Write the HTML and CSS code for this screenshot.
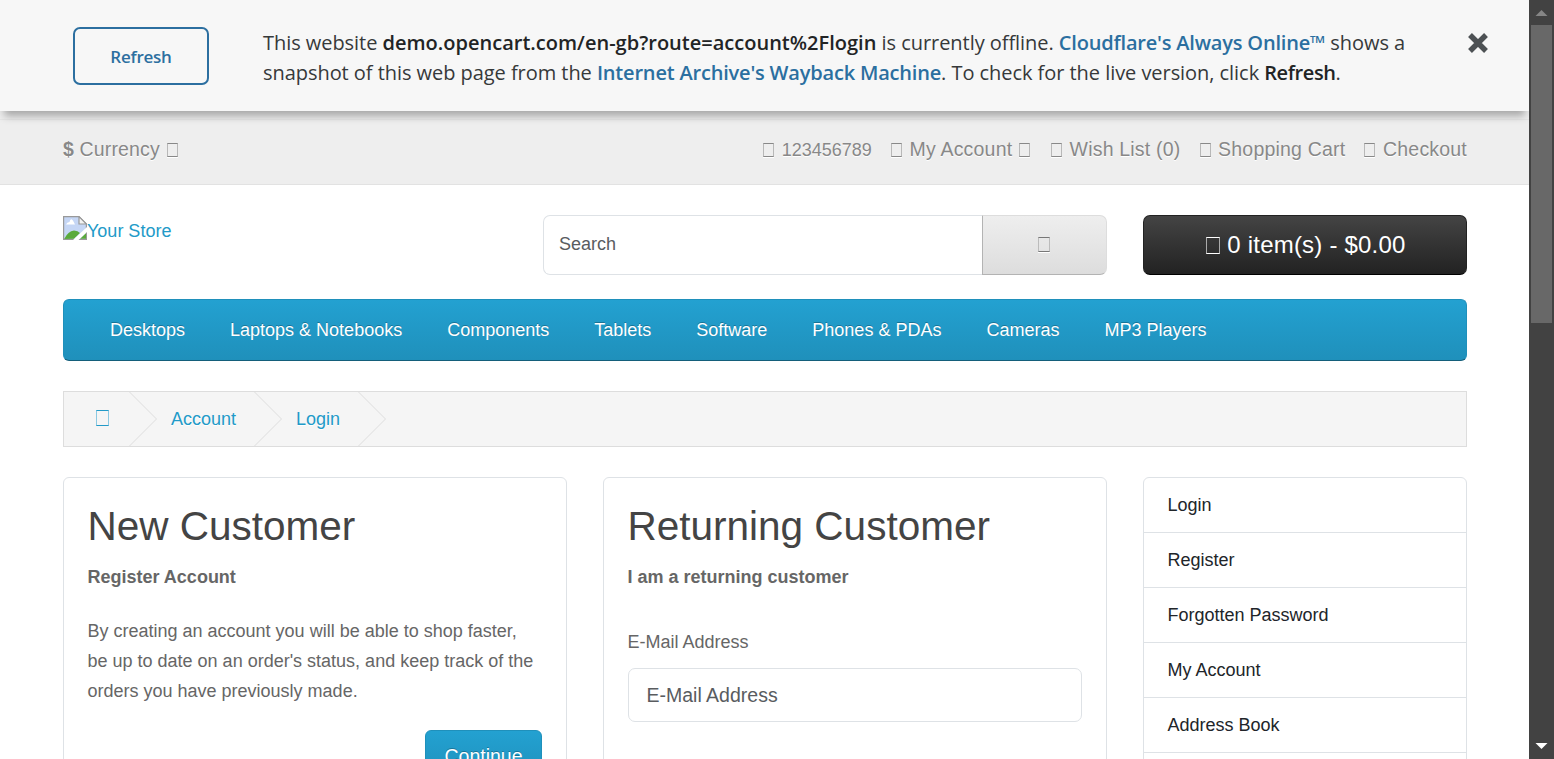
FILE: index.html
```
<!DOCTYPE html>
<html lang="en">
<head>
<meta charset="utf-8">
<title>Account Login</title>
<link rel="stylesheet" href="styles.css">
</head>
<body>
<div class="page">
  <div class="banner">
    <a class="refresh">Refresh</a>
    <div class="message">
      <div class="line">This website <b>demo.opencart.com/en-gb?route=account%2Flogin</b> is currently offline. <b class="link">Cloudflare's Always Online™</b> shows a</div>
      <div class="line">snapshot of this web page from the <b class="link">Internet Archive's Wayback Machine</b>. To check for the live version, click <b class="action">Refresh</b>.</div>
    </div>
    <svg class="close" width="22" height="22" viewBox="0 0 22 22"><path d="M3 3 19 19M19 3 3 19" stroke="#4d5154" stroke-width="5.4"/></svg>
  </div>
  <nav class="top">
    <div class="currency"><strong>$</strong> Currency <i class="box"></i></div>
    <ul class="top-links">
      <li><i class="box"></i> <span class="phone">123456789</span></li>
      <li><i class="box"></i> My Account <i class="box"></i></li>
      <li><i class="box"></i> Wish List (0)</li>
      <li><i class="box"></i> Shopping Cart</li>
      <li><i class="box"></i> Checkout</li>
    </ul>
  </nav>
  <div class="container">
    <header class="header">
      <div class="logo">
        <svg width="24" height="24" viewBox="0 0 24 24"><path d="M.6.6H16L23.4 8V23.4H.6Z" fill="#c5d6f5" stroke="#999" stroke-width="1.2"/><path d="M1.2 23Q5 15 11 14.500Q15 14.500 17 17L11 22.800Z" fill="#5aaa3c"/><path d="M17 22.800 23 17V22.800Z" fill="#5aaa3c"/><path d="M3 8.500Q4 6 6.500 6Q8-.500 12 8.500Z" fill="#fff"/><path d="M10 24 24 11V16L15.500 24Z" fill="#fff"/><path d="M16 .6V8H23.400Z" fill="#f3f3f3" stroke="#999" stroke-width="1.200"/></svg><span>Your Store</span>
      </div>
      <div class="search"><div class="search-field">Search</div><div class="search-button"><i class="box"></i></div></div>
      <div class="cart"><i class="box"></i> 0 item(s) - $0.00</div>
    </header>
    <nav class="menu">
      <a>Desktops</a><a>Laptops &amp; Notebooks</a><a>Components</a><a>Tablets</a><a>Software</a><a>Phones &amp; PDAs</a><a>Cameras</a><a>MP3 Players</a>
    </nav>
    <div class="breadcrumb">
      <div class="crumb crumb-home"><i class="box"></i></div>
      <svg class="chevron" width="28" height="54" viewBox="0 0 28 54"><path d="M.5 0 27.500 27 .5 54"/></svg>
      <div class="crumb crumb-account">Account</div>
      <svg class="chevron" width="28" height="54" viewBox="0 0 28 54"><path d="M.5 0 27.500 27 .5 54"/></svg>
      <div class="crumb crumb-login">Login</div>
      <svg class="chevron" width="28" height="54" viewBox="0 0 28 54"><path d="M.5 0 27.500 27 .5 54"/></svg>
    </div>
    <main class="columns">
      <section class="card">
        <h1>New Customer</h1>
        <p class="lead"><strong>Register Account</strong></p>
        <p class="copy">By creating an account you will be able to shop faster,<br>be up to date on an order's status, and keep track of the<br>orders you have previously made.</p>
        <div class="actions"><a class="continue">Continue</a></div>
      </section>
      <section class="card">
        <h1>Returning Customer</h1>
        <p class="lead"><strong>I am a returning customer</strong></p>
        <label class="label">E-Mail Address</label>
        <div class="input">E-Mail Address</div>
      </section>
      <aside class="list">
        <a>Login</a><a>Register</a><a>Forgotten Password</a><a>My Account</a><a>Address Book</a>
      </aside>
    </main>
  </div>
</div>
<div class="scrollbar">
  <svg width="25" height="25" viewBox="0 0 25 25"><path d="M6.500 16 12.500 10 18.500 16Z" fill="#868686"/></svg>
  <div class="thumb"></div>
  <svg class="down" width="25" height="25" viewBox="0 0 25 25"><path d="M6.500 9 12.500 15 18.500 9Z" fill="#fff"/></svg>
</div>
</body>
</html>
```
FILE: styles.css
```
* { box-sizing: border-box; }
body {
  margin: 0;
  display: flex;
  width: 1554px;
  height: 759px;
  overflow: hidden;
  background: #fff;
  color: #666;
  font: 18px/30px "Liberation Sans", Arial, sans-serif;
}
h1, p, ul { margin: 0; padding: 0; }
.page { width: 1529px; height: 759px; overflow: hidden; }
.banner {
  position: relative;
  display: flex;
  align-items: flex-start;
  height: 111px;
  padding: 27px 40px 0 73px;
  background: #f7f7f7;
  box-shadow: 0 9px 8px -4px rgba(0, 0, 0, .3);
  font-family: "Open Sans", "Noto Sans", sans-serif;
  color: #36393a;
}
.refresh {
  width: 136px;
  height: 58px;
  border: 2px solid #2c6fa0;
  border-radius: 7px;
  color: #2c6fa0;
  font-size: 17px;
  font-weight: 600;
  letter-spacing: -.25px;
  line-height: 55px;
  text-align: center;
}
.message { flex: 1; margin: 1px 0 0 54px; font-size: 20px; }
.line { white-space: nowrap; letter-spacing: -.05px; }
.line b { font-weight: 600; color: #222425; letter-spacing: .01px; }
.line b.link { color: #2b6fa0; letter-spacing: -.19px; }
.line b.action { letter-spacing: -.4px; }
.close { margin-top: 5px; }
.top {
  display: flex;
  justify-content: space-between;
  height: 74px;
  padding: 23px 62px 0 63px;
  background: linear-gradient(#eee 8px, #e6e6e6 8px, #e6e6e6 9px, #eee 9px);
  border-bottom: 1px solid #e2e2e2;
  color: #888;
  font-size: 19.5px;
  letter-spacing: .15px;
  text-shadow: 0 1px #fff;
}
.top-links {
  display: flex;
  gap: 18px;
  letter-spacing: .2px;
  list-style: none;
  white-space: nowrap;
}
.phone { font-size: 18px; letter-spacing: 0; }
.box {
  display: inline-block;
  width: 11px;
  height: 14px;
  margin: 0 1px;
  border: 1px solid currentColor;
  vertical-align: -1px;
}
.top .box {
  margin: 0 2px 0 1px;
  border-color: #888 #b8b8b8;
  box-shadow: 0 1px #fff;
}
.currency .box { margin-left: 2px; }
.container { width: 1404px; margin: 0 0 0 63px; }
.header { display: flex; height: 114px; padding-top: 30px; }
.logo { display: flex; width: 480px; padding-top: 1px; color: #229ac8; }
.search { display: flex; width: 564px; height: 60px; margin-right: 36px; }
.search-field {
  width: 439px;
  padding: 13px 15px;
  border: 1px solid #dee2e6;
  border-right: 0;
  border-radius: 7px 0 0 7px;
  color: #595c5f;
}
.search-button {
  display: flex;
  align-items: center;
  justify-content: center;
  width: 125px;
  border: 1px solid;
  border-color: #ddd #ddd #b3b3b3 #b3b3b3;
  border-radius: 0 7px 7px 0;
  background: linear-gradient(#eee, #ddd);
  color: #777;
}
.search-button .box {
  width: 12px;
  height: 15px;
  margin: 0 2px 1px 0;
  border-color: #777 #bbb;
  box-shadow: 0 1px #fff;
}
.cart {
  width: 324px;
  height: 60px;
  border: 1px solid;
  border-color: #222 #222 #000;
  border-radius: 7px;
  background: linear-gradient(#444, #222);
  color: #fff;
  font-size: 24px;
  letter-spacing: .2px;
  line-height: 58px;
  text-align: center;
}
.cart .box { width: 14px; height: 17px; border-color: #fff #aaa; }
.menu {
  display: flex;
  gap: 45px;
  height: 62px;
  padding: 15px 46px;
  border: 1px solid;
  border-color: #1f90bb #1f90bb #145e7a;
  border-radius: 6px;
  background: linear-gradient(#23a1d1, #1f90bb);
  color: #fff;
  text-shadow: 0 -1px rgba(0, 0, 0, .25);
  white-space: nowrap;
}
.breadcrumb {
  display: flex;
  height: 56px;
  margin: 30px 0;
  border: 1px solid #ddd;
  background: #f5f5f5;
  color: #229ac8;
  text-shadow: 0 1px #fff;
}
.crumb { padding-top: 12px; }
.crumb-home { width: 65px; padding-left: 31px; }
.crumb-home .box { width: 13px; height: 16px; border-color: #229ac8 #8cc9e2; }
.crumb-account { width: 97px; padding-left: 14px; }
.crumb-login { width: 76px; padding-left: 14px; }
.chevron { fill: none; stroke: #ddd; stroke-width: 1; }
.columns { display: flex; }
.card {
  width: 504px;
  height: 360px;
  margin-right: 36px;
  padding: 24px 24px 0 23.5px;
  border: 1px solid #dee2e6;
  border-radius: 6px;
}
h1 { color: #444; font-size: 40.500px; font-weight: 400; line-height: 49px; }
.lead { margin-top: 11px; }
.copy { margin-top: 24px; white-space: nowrap; }
.actions { display: flex; justify-content: flex-end; margin-top: 24px; }
.continue {
  width: 117px;
  height: 52px;
  border: 1px solid #1f90bb;
  border-radius: 6px;
  background: linear-gradient(#23a1d1, #1f90bb);
  color: #fff;
  font-size: 19.500px;
  line-height: 51px;
  text-align: center;
  text-shadow: 0 -1px rgba(0, 0, 0, .25);
}
.label { display: block; margin-top: 35px; }
.input {
  height: 54px;
  margin-top: 11px;
  padding: 11px 18px;
  border: 1px solid #dee2e6;
  border-radius: 7px;
  color: #595c5f;
  font-size: 19.500px;
}
.list {
  width: 324px;
  height: 360px;
  border: 1px solid #dee2e6;
  border-radius: 6px;
  color: #212529;
}
.list a { display: block; height: 55px; padding: 12px 23.5px; border-bottom: 1px solid #dee2e6; }
.scrollbar { display: flex; flex-direction: column; width: 25px; height: 759px; background: #424242; }
.thumb { width: 21px; height: 298px; margin-left: 2px; background: #686868; }
.scrollbar svg { display: block; }
.scrollbar .down { margin-top: auto; }
```
